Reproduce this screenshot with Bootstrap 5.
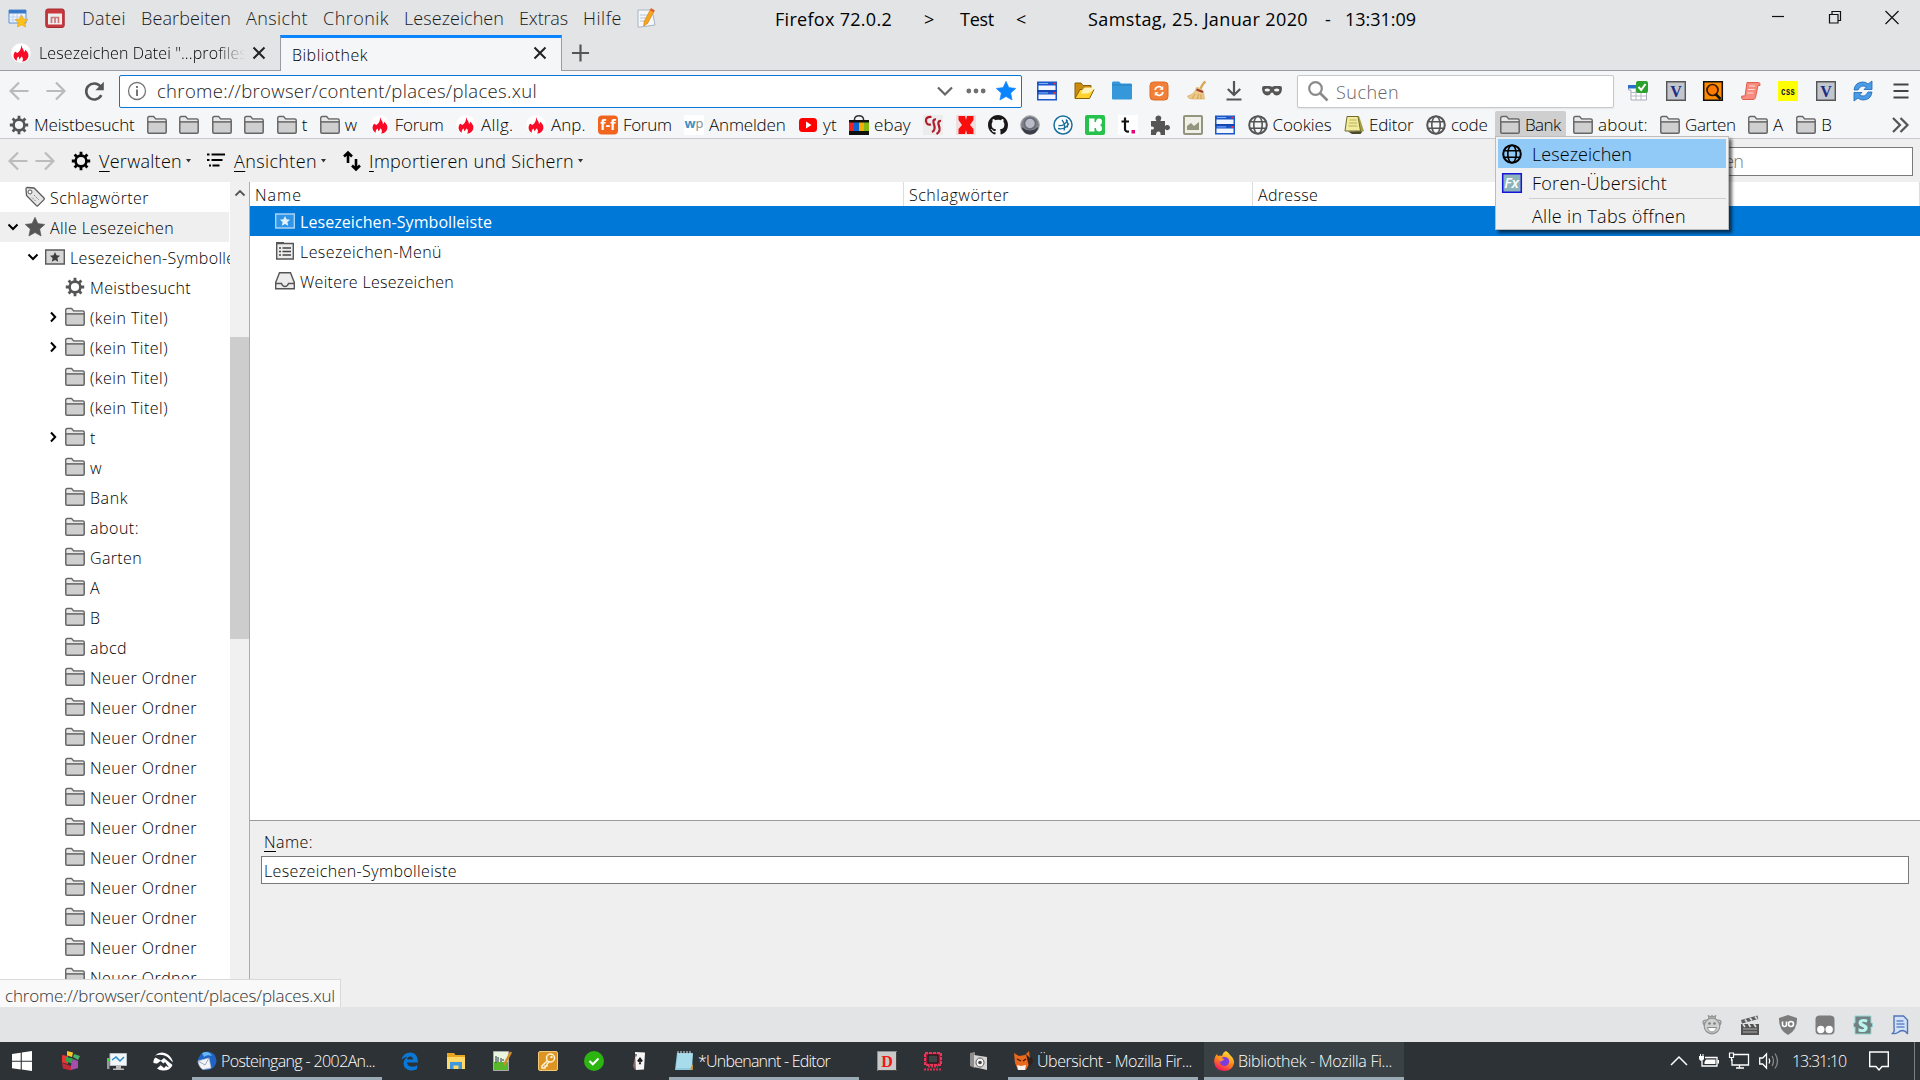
<!DOCTYPE html>
<html lang="de">
<head>
<meta charset="utf-8">
<title>Bibliothek - Mozilla Firefox</title>
<link href="https://cdn.jsdelivr.net/npm/bootstrap@5.3.0/dist/css/bootstrap.min.css" rel="stylesheet">
<style>
body{width:1920px;height:1080px;overflow:hidden;font-family:"Open Sans","Noto Sans",sans-serif;font-size:16px;font-weight:350;line-height:1.2;color:#000;background:#efefef}
svg{display:block;flex:none;width:20px;height:20px;overflow:visible}
span{white-space:pre;padding-top:3px}
.s14{width:14px;height:14px}
.titlebar{height:35px;background:#e2e4e6;font-size:18px;padding-left:8px}
.titlebar .ico2{margin-left:17px}
.titlebar .ico3{margin-left:15px}
.menus{gap:15px;margin-left:17px}
.menus span{color:#1a1a1a}
.caption-txt{margin-left:118px;font-weight:500;color:#000}
.caption-txt span{padding-top:4px}
.caption-txt .c2{margin-left:32px}.caption-txt .c3{margin-left:26px}.caption-txt .c4{margin-left:22px}
.caption-txt .c5{margin-left:62px}.caption-txt .c6{margin-left:17px}.caption-txt .c7{margin-left:14px}
.winbtns{margin-left:auto;padding-right:18.5px;gap:37px;margin-top:-1px}
.tabs{height:36px;background:#e2e4e6;border-bottom:1px solid #9b9b9f}
.tab1{width:280px;padding-left:11px;padding-right:14px}
.tab1 .fade-txt{width:206px;margin-left:8px;overflow:hidden;-webkit-mask-image:linear-gradient(90deg,#000 86%,transparent 100%)}
.tab2{width:282px;height:36px;margin-bottom:-1px;background:#f5f6f7;border:1px solid #9b9b9f;border-width:0 1px;border-top:3px solid #0a84ff;padding:0 14px 3px 11px}
.tab2 span{padding-top:5px}
.newtab{margin-left:9px;width:19px}
.navrow{height:40px;background:#f5f6f7}
.navrow .off{color:#b9babc}
.cell{width:37.5px;display:flex;justify-content:center;flex:none}
.urlbox{width:903px;height:33px;margin-left:6.5px;margin-right:6px;border:1.5px solid #0a78d6;border-radius:2px;background:#fff;padding:0 5px 0 7px;font-size:18.5px;color:#1c1c1c}
.urlbox span{margin-left:10px;padding-top:1px}
.urlbox .dots{margin-left:11px}
.urlbox .fav{margin-left:10px;color:#0a84ff}
.searchbox{width:317px;height:33px;margin:0 5.5px 0 6.5px;border:1px solid #c8c8ca;border-radius:2px;background:#fff;box-shadow:0 1px 2px #0001;padding-left:10px;font-size:18px;color:#666}
.bmbar{height:28px;background:#f5f6f7;border-bottom:1px solid #c9c9cb;padding-left:4px;gap:2.44px;font-size:17px}
.bmbar span{padding-top:1px}
.bm{display:flex;align-items:center;gap:5px;padding:0 5px;height:27px;flex:none}
.bm.on{background:#cfcfd0;border-radius:2px 2px 0 0}
.greyico{color:#555}
.bmbar .more{margin-right:10px}
.libbar{height:43px;padding:1px 7px 0 8px;font-size:18px;color:#000}
.libbar span{padding-top:2px}
.libbar .tri{width:5px;height:4px}
.libbar .off{color:#bcbcbc}
.libbar .fwd{margin-left:7px}
.libbar .g1{margin-left:16px}
.libbar .g2{margin-left:16px}
.libbar .t2{margin-left:7px}
.libsearch{width:380px;height:29px;border:1px solid #7a7a7a;background:#fff;color:#767676;padding-right:169px;justify-content:flex-end}
.work{height:825px}
.side{width:230px;background:#fff;overflow:hidden}
.trow{height:30px;padding-left:25px;gap:5px}
.trow.l1{padding-left:6px}.trow.l2{padding-left:26px}.trow.l3{padding-left:65px}.trow.l3x{padding-left:46px}
.trow .tw{width:14px;height:14px}
.trow.cur{background:#efefef;margin-right:1px}
.sbar{width:19px;background:#f0f0f0}
.sbar svg{margin:1px auto 0}
.thumb{height:302px;margin-top:134px;background:#cdcdcd}
.lib{border-left:1px solid #a3adbd}
.thead{height:24px;background:#fff}
.thead div{border-right:1px solid #dcdcdc;height:24px;padding-left:5px}
.thead .h1c{width:654px}.thead .h2c{width:349px}.thead .h3c{flex:1}
.list{height:615px;background:#fff;border-bottom:1px solid #9a9a9a}
.lrow{height:30px;padding-left:25px;gap:5px}
.lrow.sel{background:#0078d7;color:#fff;font-weight:400}
.details{padding:9px 11px 0 11px}
.details label{display:block;padding-left:3px;height:26px;line-height:18px}
.details .fld{height:28px;border:1px solid #7a7a7a;background:#fff;padding-left:2px}
.statusbar{height:35px;background:#e2e4e6;padding-right:9px;gap:17.8px;justify-content:flex-end}
.statusbar svg{opacity:.95}
.tip{left:0;top:979px;width:341px;height:28px;background:#f9f9f9;border:1px solid #d9d9d9;border-width:1px 1px 0 0;padding:2px 0 0 5px;color:#333;font-size:17px}
.taskbar{height:38px;background:#2d3237;color:#fff;font-size:16px}
.taskbar span{padding-top:2px}
.tcell{width:46px;display:flex;justify-content:center;flex:none}
.tcell.first{width:48px;padding-right:4px}
.tbtn{width:190px;height:38px;border-bottom:3px solid #9aabb6;margin:0 5px 0 6px;padding:3px 0 0 5px;gap:4px;flex:none}
.tbtn.act{width:200px;background:#3a4144;padding-left:10px;margin-left:1px}
.tray{margin-left:auto;gap:10px}
.tray .clock{margin-left:3px;margin-right:13px}
.tray .edge-line{width:1px;height:38px;background:#7a7e82;margin:0 5px 0 15px}
.popup{left:1495px;top:136px;width:234px;height:94px;background:#f1f1f1;border:1px solid #bdbdbd;box-shadow:3px 3px 3px #0009;padding:2px;font-size:18px}
.prow{padding-left:4px;gap:10px;height:29px}
.prow.hot{background:#91c9f7}
.psep{height:1px;background:#cfcfcf;margin:1px 0 0 31px}
.prow.last{padding-left:34px;height:32px}
u{text-underline-offset:3px}
</style>
<script src="https://cdn.jsdelivr.net/npm/bootstrap@5.3.0/dist/js/bootstrap.bundle.min.js"></script>
</head>
<body>
<svg class="d-none" xmlns="http://www.w3.org/2000/svg">
<symbol id="folder" viewBox="0 0 20 20"><path d="M.8 17V3Q.8 1.600 2.200 1.600H6.600L8.600 4H17.800Q19.200 4 19.200 5.400V17Q19.200 18.200 18 18.200H2Q.8 18.200.8 17z" fill="#cfcfcf" stroke="#666" stroke-width="1.500"/><path d="M1.600 6.300V3q0-.6.8-.6h3.900l2 2.400h9.400q.7 0 .7.9v.6z" fill="#e8e8e8"/><path d="M1 6.900H19" stroke="#666" stroke-width="1.500"/></symbol>
<symbol id="gear" viewBox="0 0 20 20"><circle cx="10" cy="10" r="5.400" fill="none" stroke="currentColor" stroke-width="2.600"/><g stroke="currentColor" stroke-width="2.800"><path d="M10 .8V4M10 16v3.200M.8 10H4M16 10h3.200M3.600 3.600l2.200 2.200M14.200 14.200l2.200 2.200M3.600 16.400l2.200-2.200M14.200 5.800l2.200-2.200"/></g></symbol>
<symbol id="fire" viewBox="0 0 20 20"><circle cx="10" cy="10" r="9.800" fill="#fff"/><path d="M10 1.800C10.500 4.800 13 6 13 9.200c.8-.7 1.200-1.500 1.200-2.500C16.500 8.500 18 11 17.300 13.800c-.8 3-3.300 4.800-6.300 4.700 1.500-1.800 1.200-3.600-.6-5.300-.2 1.400-1.400 1.700-1.500 3.200-.8-.8-1.200-1.900-1-3C6 14.300 5.300 15.800 6 17.800 2 16 1.700 11.500 4.200 8.800c1 .2 1.500.7 1.800 1.500C9 8.800 10.500 5.500 10 1.800z" fill="#f90a26"/></symbol>
<symbol id="globe" viewBox="0 0 20 20"><g fill="none" stroke="currentColor" stroke-width="2"><circle cx="10" cy="10" r="8.800"/><ellipse cx="10" cy="10" rx="4.200" ry="8.800" stroke-width="1.600"/><path d="M2.200 6.800H17.800M2.200 13.200H17.800" stroke-width="1.600"/></g></symbol>
<symbol id="sheet" viewBox="0 0 20 20"><path d="M0 .5h20v19H0z" fill="#1d57c8"/><path d="M1.500 4.500h17v4.500h-17zM1.500 13.500h17v4.500h-17z" fill="#f2f7ff"/><path d="M0 9.500h20v1H0z" fill="#1038a0"/><path d="M2 2.500h9M2 11.900h9" stroke="#7fb2ff"/><path d="M16.500 2.500h2M16.500 11.900h2" stroke="#f33" stroke-width="1.700"/></symbol>
<symbol id="vbox" viewBox="0 0 20 20"><path d="M.7.7h18.600v18.600H.7z" fill="#c2c6cc" stroke="#555" stroke-width="1.400"/><text x="10" y="15.500" text-anchor="middle" font-family="Liberation Serif,serif" font-weight="700" font-size="16" fill="#1c2c86">V</text></symbol>
<symbol id="cross" viewBox="0 0 14 14"><path d="M1.500 1.500l11 11M12.500 1.500l-11 11" stroke="#222" stroke-width="2"/></symbol>
<symbol id="arrl" viewBox="0 0 20 20"><path d="M19.500 10H2M10 1.500L1.500 10l8.500 8.500" fill="none" stroke="currentColor" stroke-width="2.200"/></symbol>
<symbol id="arrr" viewBox="0 0 20 20"><path d="M.5 10H18M10 1.500L18.500 10l-8.500 8.500" fill="none" stroke="currentColor" stroke-width="2.200"/></symbol>
<symbol id="tri" viewBox="0 0 5 4"><path d="M0 0h5L2.500 3.500z" fill="#333"/></symbol>
<symbol id="down" viewBox="0 0 14 14"><path d="M2.500 4.500l4.500 4.500 4.500-4.500" fill="none" stroke="#000" stroke-width="2"/></symbol>
<symbol id="right" viewBox="0 0 14 14"><path d="M5 2.500l4.200 4.500L5 11.500" fill="none" stroke="#000" stroke-width="2"/></symbol>
<symbol id="star" viewBox="0 0 20 20"><path d="M10 .3l2.900 6.300 6.900.8-5.100 4.700 1.400 6.900L10 15.600 3.900 19l1.400-6.900L.2 7.400l6.900-.8z" fill="currentColor" stroke="currentColor" stroke-width=".6" stroke-linejoin="round"/></symbol>
</svg>

<header class="titlebar d-flex align-items-center">
 <svg viewBox="0 0 20 20"><path d="M1 2h17v13H1z" fill="#eef4fc" stroke="#5b8fd4"/><path d="M1 2h17v3.500H1z" fill="#3a78c8"/><path d="M5 6v9M9 6v9M13 6v9M1 9h17M1 12h17" stroke="#b5cdea" stroke-width=".8"/><path d="M13.500 7l2 4 4.500.5-3.300 3 .9 4.500-4.100-2.200L9.400 19l.9-4.500-3.300-3 4.500-.5z" fill="#fbc21d" stroke="#e69b10" stroke-width=".6"/></svg>
 <svg class="ico2" viewBox="0 0 20 20"><rect x=".8" y="1" width="18.400" height="18.500" rx="2" fill="#c8383e" stroke="#a32c31"/><path d="M3 5.500h14v11H3z" fill="#eee"/><path d="M6.500 15V9.500h7V15M10 9.500V15" fill="none" stroke="#c8777a" stroke-width="1.700"/></svg>
 <nav class="menus d-flex"><span data-w="44">Datei</span><span data-w="90">Bearbeiten</span><span data-w="62">Ansicht</span><span data-w="66">Chronik</span><span data-w="100">Lesezeichen</span><span data-w="49">Extras</span><span data-w="39">Hilfe</span></nav>
 <svg class="ico3" viewBox="0 0 20 20"><path d="M1 2h14l3 15-14 2H1z" fill="#f5f7fa" stroke="#a9b4c0"/><path d="M3 7h9M3 10h9M3 13h9" stroke="#b7c4d2"/><path d="M14 .5l3.500 2-7 13-3.800 2.500.5-4.500z" fill="#f9a51a" stroke="#c67a12" stroke-width=".6"/><path d="M14 .5l3.500 2-1 1.800-3.400-2z" fill="#e2554a"/></svg>
 <div class="caption-txt d-flex"><span data-w="117">Firefox 72.0.2</span><span class="c2" data-w="10">&gt;</span><span class="c3" data-w="34">Test</span><span class="c4" data-w="10">&lt;</span><span class="c5" data-w="220">Samstag, 25. Januar 2020</span><span class="c6" data-w="6">-</span><span class="c7" data-w="71">13:31:09</span></div>
 <div class="winbtns d-flex"><svg viewBox="0 0 20 20"><path d="M4 9.500h12" stroke="#111" stroke-width="1.200"/></svg><svg viewBox="0 0 20 20"><path d="M4.500 7.500h8.500v8.500H4.500zM7 7.500V4.500h8.500v9H13" fill="none" stroke="#111" stroke-width="1.200"/></svg><svg viewBox="0 0 20 20"><path d="M3.500 4l13 13M16.500 4l-13 13" stroke="#111" stroke-width="1.200"/></svg></div>
</header>

<div class="tabs d-flex align-items-center">
 <div class="tab1 d-flex align-items-center"><svg><use href="#fire"/></svg><div class="fade-txt"><span data-w="208">Lesezeichen Datei "...profiles</span></div><svg class="ms-auto s14"><use href="#cross"/></svg></div>
 <div class="tab2 d-flex align-items-center justify-content-between"><span data-w="76">Bibliothek</span><svg class="s14"><use href="#cross"/></svg></div>
 <svg class="newtab" viewBox="0 0 20 20"><path d="M10 1v18M1 10h18" stroke="#555" stroke-width="2.300"/></svg>
</div>

<div class="navrow d-flex align-items-center">
 <div class="cell off"><svg><use href="#arrl"/></svg></div>
 <div class="cell off"><svg><use href="#arrr"/></svg></div>
 <div class="cell"><svg viewBox="0 0 20 20"><path d="M17.300 14.200A8 8 0 1 1 16.500 5.500" fill="none" stroke="#555" stroke-width="2.600"/><path d="M19.800.8v8.400h-8.400z" fill="#555"/></svg></div>
 <div class="urlbox d-flex align-items-center">
  <svg viewBox="0 0 20 20"><circle cx="10" cy="10" r="8.500" fill="none" stroke="#777" stroke-width="1.300"/><path d="M10 8.500V15M10 5v2" stroke="#777" stroke-width="2"/></svg>
  <span data-w="380">chrome://browser/content/places/places.xul</span>
  <svg class="ms-auto" viewBox="0 0 20 20"><path d="M3 6.500l7 7 7-7" fill="none" stroke="#666" stroke-width="2.200"/></svg>
  <svg class="dots" viewBox="0 0 20 20"><g fill="#707070"><circle cx="2.800" cy="10" r="2.400"/><circle cx="10" cy="10" r="2.400"/><circle cx="17.200" cy="10" r="2.400"/></g></svg>
  <svg class="fav"><use href="#star"/></svg>
 </div>
 <div class="cell"><svg><use href="#sheet"/></svg></div>
 <div class="cell"><svg viewBox="0 0 20 20"><path d="M1 17V2h6l2 2.500h8V8" fill="#c98c10" stroke="#8a6006"/><path d="M1 17.500L6 8.500H20l-4.500 9z" fill="#ffd22e" stroke="#8a6006"/><path d="M8.500 8.500l2.500-2h8l1 2-6 4H7z" fill="#fff3b8"/></svg></div>
 <div class="cell"><svg viewBox="0 0 20 20"><path d="M0 17.500V2q0-1.500 1-1.500h6l2 2h10q1 0 1 1.500v13.500q0 1-1 1H1q-1 0-1-1z" fill="#3498db"/><path d="M0 4h20" stroke="#2a80bd"/></svg></div>
 <div class="cell"><svg viewBox="0 0 20 20"><rect x="1" y="1" width="18" height="18" rx="3.500" fill="#f27f38" stroke="#dd6a24"/><path d="M6 9a4 4 0 0 1 7-2M14 11a4 4 0 0 1-7 2" fill="none" stroke="#fff" stroke-width="1.800"/><path d="M14.200 5v3.800h-3.800zM5.800 15v-3.800h3.800z" fill="#fff"/></svg></div>
 <div class="cell"><svg viewBox="0 0 20 20"><path d="M18.500.5Q15 3 13.500 8" fill="none" stroke="#d9a95a" stroke-width="2.200"/><path d="M9.500 6.500q5 0 7 4.500l1 7H5q-4 0-4.500-3Q8 13 9.500 6.500z" fill="#ecc987" stroke="#d6a95e" stroke-width=".6"/><path d="M9.500 8.500l6.500 2.500" stroke="#9a3c30" stroke-width="2"/><path d="M8 13l-3 4.500M11.500 13l-1 5M14 13.500v4.500" stroke="#c9a05a"/></svg></div>
 <div class="cell"><svg viewBox="0 0 20 20"><path d="M10 0v13.500M3.800 8l6.200 6 6.200-6M2.500 18.500h15" fill="none" stroke="#555" stroke-width="2.200"/></svg></div>
 <div class="cell"><svg viewBox="0 0 20 20"><path d="M0 7q0-2 2-2h5q2 0 3 1 1-1 3-1h5q2 0 2 2 0 7-5 7.500-3 0-4-2.500-.9-1-2 0-1 2.500-4 2.500Q0 14 0 7z" fill="#555"/><ellipse cx="5.300" cy="9" rx="2.700" ry="1.600" fill="#f5f6f7"/><ellipse cx="14.700" cy="9" rx="2.700" ry="1.600" fill="#f5f6f7"/></svg></div>
 <div class="searchbox d-flex align-items-center"><svg viewBox="0 0 20 20"><circle cx="7.500" cy="7.500" r="6.300" fill="none" stroke="#8a8a8a" stroke-width="2.200"/><path d="M12 12l7.500 7.500" stroke="#8a8a8a" stroke-width="2.600"/></svg><span data-w="63" class="ms-2">Suchen</span></div>
 <div class="cell"><svg viewBox="0 0 20 20"><path d="M.5 4.500h18v14.500H3V9H.5z" fill="#fff" stroke="#aab"/><path d="M0 4h9v3.500H0z" fill="#2a6fd0"/><path d="M3 11.500h15M3 15h15M8 8v11M13 8v11" stroke="#b8b8c4"/><rect x="8" y="0" width="12" height="12" rx="2" fill="#2da12d"/><path d="M10.500 6l2.700 3 4.300-6" stroke="#fff" stroke-width="2" fill="none"/></svg></div>
 <div class="cell"><svg><use href="#vbox"/></svg></div>
 <div class="cell"><svg viewBox="0 0 20 20"><path d="M.7.7h18.600v18.600H.7z" fill="#ff8c00" stroke="#111" stroke-width="1.500"/><circle cx="9.500" cy="9" r="5.500" fill="#ff7a00" stroke="#3a1c00" stroke-width="1.700"/><path d="M12.500 13l5 5" stroke="#111" stroke-width="2.500"/></svg></div>
 <div class="cell"><svg viewBox="0 0 20 20"><path d="M6 1.500h11.500q2 0 1.500 3l-2 0-2.500 12q-.5 2-2.500 2H2Q0 18 .8 15H4z" fill="#f98b7d" stroke="#dc5f50"/><path d="M8 5h6M7 8.500h6.500M6.500 12h6" stroke="#fdd"/></svg></div>
 <div class="cell"><svg viewBox="0 0 20 20"><path d="M0 0h20v20H0z" fill="#ff0"/><text x="10" y="13.500" text-anchor="middle" font-family="Liberation Mono,monospace" font-weight="700" font-size="10.500" textLength="14" lengthAdjust="spacingAndGlyphs" fill="#113">css</text></svg></div>
 <div class="cell"><svg><use href="#vbox"/></svg></div>
 <div class="cell"><svg viewBox="0 0 20 20"><path d="M1 9Q2 1 10 1q3 0 5 2L19 0v8.500h-8L13.500 6Q8 3 5 9zM19 11q-1 8-9 8-3 0-5-2l-4 3v-8.500h8L6.500 14q5.500 3 8.500-3z" fill="#4a9ce6" stroke="#1a66b8" stroke-width=".8"/></svg></div>
 <div class="cell"><svg viewBox="0 0 20 20"><path d="M2.500 3.500h15M2.500 10h15M2.500 16.500h15" stroke="#444" stroke-width="2.200"/></svg></div>
</div>

<div class="bmbar d-flex align-items-center">
 <div class="bm"><svg class="greyico"><use href="#gear"/></svg><span data-w="100.600">Meistbesucht</span></div>
 <div class="bm"><svg><use href="#folder"/></svg></div>
 <div class="bm"><svg><use href="#folder"/></svg></div>
 <div class="bm"><svg><use href="#folder"/></svg></div>
 <div class="bm"><svg><use href="#folder"/></svg></div>
 <div class="bm"><svg><use href="#folder"/></svg><span data-w="5.600">t</span></div>
 <div class="bm"><svg><use href="#folder"/></svg><span data-w="12.600">w</span></div>
 <div class="bm"><svg><use href="#fire"/></svg><span data-w="48.600">Forum</span></div>
 <div class="bm"><svg><use href="#fire"/></svg><span data-w="32.600">Allg.</span></div>
 <div class="bm"><svg><use href="#fire"/></svg><span data-w="34.600">Anp.</span></div>
 <div class="bm"><svg viewBox="0 0 20 20"><rect y=".5" width="20" height="19" rx="4" fill="#f0641e"/><text x="10" y="15" text-anchor="middle" font-family="Open Sans,sans-serif" font-weight="700" font-size="14" fill="#fff">f-f</text></svg><span data-w="48.600">Forum</span></div>
 <div class="bm"><svg viewBox="0 0 20 20"><path d="M0 0h20v20H0z" fill="#fff"/><text x="0.500" y="13" font-family="Open Sans,sans-serif" font-weight="700" font-size="13" fill="#3b8fc4" textLength="19" lengthAdjust="spacingAndGlyphs">w<tspan fill="#8a8a8a" font-weight="400">p</tspan></text></svg><span data-w="76.600">Anmelden</span></div>
 <div class="bm"><svg viewBox="0 0 20 20"><rect x="1" y="3" width="18" height="14" rx="3.500" fill="#f00"/><path d="M8 6.500v7l5.500-3.500z" fill="#fff"/></svg><span data-w="13.600">yt</span></div>
 <div class="bm"><svg viewBox="0 0 20 20"><path d="M5.500 7V4Q6 .8 10 .8T14.500 4v3" fill="none" stroke="#333" stroke-width="1.500"/><path d="M0 5h20v15H0z" fill="#111"/><path d="M0 7.500h5V16H0z" fill="#e22"/><path d="M5 7.500h5V16H5z" fill="#0a64d2"/><path d="M10 7.500h5V16h-5z" fill="#f5af02"/><path d="M15 7.500h5V16h-5z" fill="#86b817"/></svg><span data-w="36.600">ebay</span></div>
 <div class="bm"><svg viewBox="0 0 20 20"><path d="M0 0h20v20H0z" fill="#ececec"/><path d="M8.500 2Q2.500 1.500 3 6t5 3.500M13 4.500Q9 4 11 9.500T9 17M18 6Q14 5.500 16 11t-2.500 8" fill="none" stroke="#b01c2c" stroke-width="2.200"/></svg></div>
 <div class="bm"><svg viewBox="0 0 20 20"><path d="M0 0h20v20H0z" fill="#f0dede"/><path d="M2.500 1H9l1 4 1-4h6.500v4L14 10l3.500 4v5H11l-1-4-1 4H2.500v-5L6 10 2.500 5z" fill="#f90d0d"/></svg></div>
 <div class="bm"><svg viewBox="0 0 16 16"><path fill="#191717" d="M8 0C3.580 0 0 3.580 0 8c0 3.540 2.290 6.530 5.470 7.590.4.070.55-.17.55-.38 0-.19-.01-.82-.01-1.490-2.010.37-2.530-.49-2.690-.94-.09-.23-.48-.94-.82-1.130-.28-.15-.68-.52-.01-.53.63-.01 1.080.58 1.230.82.72 1.210 1.870.87 2.330.66.070-.52.28-.87.510-1.070-1.780-.2-3.640-.89-3.640-3.950 0-.87.310-1.590.82-2.150-.08-.2-.36-1.020.08-2.120 0 0 .67-.21 2.200.82.640-.18 1.320-.27 2-.27s1.360.09 2 .27c1.530-1.040 2.200-.82 2.200-.82.440 1.100.16 1.920.08 2.120.510.560.82 1.270.82 2.150 0 3.070-1.870 3.750-3.650 3.950.290.250.540.730.540 1.480 0 1.070-.01 1.930-.01 2.200 0 .21.150.460.550.38A8.010 8.010 0 0 0 16 8c0-4.420-3.580-8-8-8z"/></svg></div>
 <div class="bm"><svg viewBox="0 0 20 20"><circle cx="10" cy="10" r="9.300" fill="#7c808a" stroke="#aaa"/><circle cx="10" cy="8.500" r="5.500" fill="#b9bcc6" stroke="#666a74" stroke-width="1.500"/><path d="M1.500 12q8.500 7 17 0-2 7.500-8.500 7.500T1.500 12z" fill="#3b3e48"/></svg></div>
 <div class="bm"><svg viewBox="0 0 20 20"><circle cx="10" cy="10" r="9" fill="#fff" stroke="#1a6f9e" stroke-width="1.500"/><path d="M5 13.500q7 1.500 11-5M5.500 10.500q6 1 9-5.500M9 5q4 5 2 10.500M13 4.500q3 4 1 8" fill="none" stroke="#1a6f9e" stroke-width="1.300"/></svg></div>
 <div class="bm"><svg viewBox="0 0 20 20"><rect width="20" height="20" rx="2" fill="#27c24c"/><path d="M4 3.500h5.500v3.500h1.500q0-3.500 3-3.500t3 3-2 3.500q2 .5 2 3.500t-3 3-3-3.500H9.500v3.500H4z" fill="#fff"/></svg></div>
 <div class="bm"><svg viewBox="0 0 20 20"><path d="M0 0h20v20H0z" fill="#fff"/><path d="M7 2.500V14q0 3 4 2.500M3.500 6.500H11" fill="none" stroke="#111" stroke-width="2.200"/><path d="M13.500 15h3.500v3.500h-3.500z" fill="#e6007e"/></svg></div>
 <div class="bm"><svg viewBox="0 0 20 20"><path d="M1 6h5.500Q5 4 5.500 2.500 6.300.5 8.500.5t2.800 2q0 1.500-1 3.500H15v5q1-1.500 3-1t2 2.500-2 2.500-3-1V20h-4.500q.5-3.500-2-3.500T6 20H1v-5.500q3 .5 3-1.500t-3-1.500z" fill="#555"/></svg></div>
 <div class="bm"><svg viewBox="0 0 20 20"><rect x="1" y="1" width="18" height="18" rx="1" fill="#f0f0e8" stroke="#93957f" stroke-width="2"/><path d="M4 15v-4l4-3 3 3 5-4v8z" fill="#93957f"/></svg></div>
 <div class="bm"><svg><use href="#sheet"/></svg></div>
 <div class="bm"><svg class="greyico"><use href="#globe"/></svg><span data-w="59">Cookies</span></div>
 <div class="bm"><svg viewBox="0 0 20 20"><path d="M5 2l10-1 5 15-8 3z" fill="#a7a04a"/><path d="M3 1.500h11l2.500 14.500H1z" fill="#f1eb9a" stroke="#6f6b30"/><path d="M5.500 5h7M5 8h8M4.500 11h9" stroke="#b9b060"/><path d="M4 16.500h14.500l-2 2.500H8z" fill="#4a4a2a"/></svg><span data-w="44.600">Editor</span></div>
 <div class="bm"><svg class="greyico"><use href="#globe"/></svg><span data-w="36.600">code</span></div>
 <div class="bm on"><svg><use href="#folder"/></svg><span data-w="35.600">Bank</span></div>
 <div class="bm"><svg><use href="#folder"/></svg><span data-w="49.600">about:</span></div>
 <div class="bm"><svg><use href="#folder"/></svg><span data-w="50.600">Garten</span></div>
 <div class="bm"><svg><use href="#folder"/></svg><span data-w="10.600">A</span></div>
 <div class="bm"><svg><use href="#folder"/></svg><span data-w="10">B</span></div>
 <svg class="ms-auto more" viewBox="0 0 20 20"><path d="M3 3l7 7-7 7M10.500 3l7 7-7 7" fill="none" stroke="#555" stroke-width="2.200"/></svg>
</div>

<div class="libbar d-flex align-items-center">
 <svg class="off"><use href="#arrl"/></svg>
 <svg class="off fwd"><use href="#arrr"/></svg>
 <svg class="g1"><use href="#gear"/></svg>
 <span data-w="83" class="ms-2"><u>V</u>erwalten</span><svg class="tri ms-1"><use href="#tri"/></svg>
 <svg class="g2" viewBox="0 0 20 20"><path d="M0 3.500h2.500M0 9h2.500M4.500 3.500H18M4.500 9h11M2 14.500h2M5.500 14.500h7" stroke="#000" stroke-width="2.200"/></svg>
 <span data-w="83" class="t2"><u>A</u>nsichten</span><svg class="tri ms-1"><use href="#tri"/></svg>
 <svg class="g2" viewBox="0 0 20 20"><path d="M6 12V2M2 5.500L6 1.500l4 4M14 8v10M10 14.500l4 4 4-4" fill="none" stroke="#000" stroke-width="2.600"/></svg>
 <span data-w="205" class="t2"><u>I</u>mportieren und Sichern</span><svg class="tri ms-1"><use href="#tri"/></svg>
 <div class="libsearch ms-auto d-flex align-items-center"><span data-w="190">Lesezeichen durchsuchen</span></div>
</div>

<main class="work d-flex">
 <aside class="side">
  <div class="trow d-flex align-items-center"><svg viewBox="0 0 20 20"><path d="M1 2q0-1.500 1.500-1.500L9 1l10 10q.8.800 0 1.600l-6 6q-.8.800-1.600 0L1.500 8.500z" fill="#e6e6e6" stroke="#5a5a5a" stroke-width="1.300"/><circle cx="5" cy="5" r="2" fill="#fff" stroke="#5a5a5a"/><path d="M9 8l5 5M7 10.500l4 4" stroke="#8a8a8a" stroke-width="1" stroke-dasharray="2 1"/></svg><span data-w="99">Schlagwörter</span></div>
  <div class="trow l1 cur d-flex align-items-center"><svg class="tw"><use href="#down"/></svg><svg class="greyico"><use href="#star"/></svg><span data-w="124">Alle Lesezeichen</span></div>
  <div class="trow l2 d-flex align-items-center"><svg class="tw"><use href="#down"/></svg><svg viewBox="0 0 20 20"><path d="M.7 3h18.600v14H.7z" fill="#d6d6d6" stroke="#5a5a5a" stroke-width="1.400"/><path d="M10 5l1.500 3.300 3.600.4-2.700 2.400.8 3.600L10 12.900l-3.200 1.800.8-3.600-2.700-2.400 3.600-.4z" fill="#3d3d3d"/></svg><span data-w="192">Lesezeichen-Symbolleiste</span></div>
  <div class="trow l3 d-flex align-items-center"><svg class="greyico"><use href="#gear"/></svg><span data-w="101">Meistbesucht</span></div>
  <div class="trow l3x d-flex align-items-center"><svg class="tw"><use href="#right"/></svg><svg><use href="#folder"/></svg><span data-w="78">(kein Titel)</span></div>
  <div class="trow l3x d-flex align-items-center"><svg class="tw"><use href="#right"/></svg><svg><use href="#folder"/></svg><span data-w="78">(kein Titel)</span></div>
  <div class="trow l3 d-flex align-items-center"><svg><use href="#folder"/></svg><span data-w="78">(kein Titel)</span></div>
  <div class="trow l3 d-flex align-items-center"><svg><use href="#folder"/></svg><span data-w="78">(kein Titel)</span></div>
  <div class="trow l3x d-flex align-items-center"><svg class="tw"><use href="#right"/></svg><svg><use href="#folder"/></svg><span>t</span></div>
  <div class="trow l3 d-flex align-items-center"><svg><use href="#folder"/></svg><span>w</span></div>
  <div class="trow l3 d-flex align-items-center"><svg><use href="#folder"/></svg><span data-w="38">Bank</span></div>
  <div class="trow l3 d-flex align-items-center"><svg><use href="#folder"/></svg><span data-w="49">about:</span></div>
  <div class="trow l3 d-flex align-items-center"><svg><use href="#folder"/></svg><span data-w="52">Garten</span></div>
  <div class="trow l3 d-flex align-items-center"><svg><use href="#folder"/></svg><span>A</span></div>
  <div class="trow l3 d-flex align-items-center"><svg><use href="#folder"/></svg><span>B</span></div>
  <div class="trow l3 d-flex align-items-center"><svg><use href="#folder"/></svg><span data-w="37">abcd</span></div>
  <div class="trow l3 d-flex align-items-center"><svg><use href="#folder"/></svg><span data-w="107">Neuer Ordner</span></div>
  <div class="trow l3 d-flex align-items-center"><svg><use href="#folder"/></svg><span data-w="107">Neuer Ordner</span></div>
  <div class="trow l3 d-flex align-items-center"><svg><use href="#folder"/></svg><span data-w="107">Neuer Ordner</span></div>
  <div class="trow l3 d-flex align-items-center"><svg><use href="#folder"/></svg><span data-w="107">Neuer Ordner</span></div>
  <div class="trow l3 d-flex align-items-center"><svg><use href="#folder"/></svg><span data-w="107">Neuer Ordner</span></div>
  <div class="trow l3 d-flex align-items-center"><svg><use href="#folder"/></svg><span data-w="107">Neuer Ordner</span></div>
  <div class="trow l3 d-flex align-items-center"><svg><use href="#folder"/></svg><span data-w="107">Neuer Ordner</span></div>
  <div class="trow l3 d-flex align-items-center"><svg><use href="#folder"/></svg><span data-w="107">Neuer Ordner</span></div>
  <div class="trow l3 d-flex align-items-center"><svg><use href="#folder"/></svg><span data-w="107">Neuer Ordner</span></div>
  <div class="trow l3 d-flex align-items-center"><svg><use href="#folder"/></svg><span data-w="107">Neuer Ordner</span></div>
  <div class="trow l3 d-flex align-items-center"><svg><use href="#folder"/></svg><span data-w="107">Neuer Ordner</span></div>
 </aside>
 <div class="sbar"><svg viewBox="0 0 20 20"><path d="M5.500 12.500l4.500-4.500 4.500 4.500" fill="none" stroke="#555" stroke-width="1.800"/></svg><div class="thumb"></div></div>
 <section class="lib flex-fill d-flex flex-column">
  <div class="thead d-flex"><div class="h1c d-flex align-items-center"><span data-w="47">Name</span></div><div class="h2c d-flex align-items-center"><span data-w="100">Schlagwörter</span></div><div class="h3c d-flex align-items-center"><span data-w="60">Adresse</span></div></div>
  <div class="list">
   <div class="lrow sel d-flex align-items-center"><svg viewBox="0 0 20 20"><path d="M.7 3h18.600v14H.7z" fill="#2f95e6" stroke="#a9d2f5" stroke-width="1.400"/><path d="M10 5l1.500 3.300 3.600.4-2.700 2.400.8 3.600L10 12.900l-3.200 1.800.8-3.600-2.700-2.400 3.600-.4z" fill="#e4f2fd"/></svg><span data-w="192">Lesezeichen-Symbolleiste</span></div>
   <div class="lrow d-flex align-items-center"><svg viewBox="0 0 20 20"><path d="M1.700 2.500h16.600v15.500H1.700z" fill="#ececec" stroke="#555" stroke-width="1.400"/><path d="M1 2h8" stroke="#555" stroke-width="2"/><path d="M4 7h2M4 10.500h2M4 14h2M7.500 7H16M7.500 10.500H16M7.500 14H16" stroke="#444" stroke-width="1.400"/></svg><span data-w="142">Lesezeichen-Menü</span></div>
   <div class="lrow d-flex align-items-center"><svg viewBox="0 0 20 20"><path d="M.7 11.500L4.500 1.700h11l3.800 9.800v6.300H.7z" fill="#ececec" stroke="#555" stroke-width="1.400"/><path d="M1 12.500h5.500Q7.500 15.500 10 15.500t3.500-3H19" fill="none" stroke="#555" stroke-width="1.400"/></svg><span data-w="154">Weitere Lesezeichen</span></div>
  </div>
  <div class="details flex-fill"><label><span data-w="49"><u>N</u>ame:</span></label><div class="fld d-flex align-items-center"><span data-w="193">Lesezeichen-Symbolleiste</span></div></div>
 </section>
</main>

<div class="statusbar d-flex align-items-center">
 <svg viewBox="0 0 20 20"><g fill="#cfcfcf" stroke="#8e8e8e" stroke-width="1.200"><circle cx="3.500" cy="7.500" r="2.500"/><circle cx="16.500" cy="7.500" r="2.500"/><path d="M7 4L6.500.8 9 2l1-1.500L11 2l2.500-1.200L13 4" /><circle cx="10" cy="11" r="7.800"/></g><path d="M5.500 12.500h9q-1 4.500-4.500 4.500t-4.500-4.500z" fill="#fff" stroke="#888"/><circle cx="7.500" cy="8.500" r="1.300" fill="#777"/><circle cx="12.500" cy="8.500" r="1.300" fill="#777"/></svg>
 <svg viewBox="0 0 20 20"><path d="M1 9h18v11H1z" fill="#4c4c4c"/><path d="M1 5L17.500.5l.8 3.500L2 8.500z" fill="#555"/><path d="M5 4.500l2 2.500M10 3l2 2.500M15 1.500l2 2.500M3 9l2 3M8.500 9l2 3M14 9l2 3" stroke="#ddd" stroke-width="1.800"/><path d="M3 14h14M3 17h14" stroke="#aaa"/></svg>
 <svg viewBox="0 0 20 20"><path d="M10 0l9 3q.5 12-9 17Q.5 15 1 3z" fill="#777"/><path d="M4.500 6.500v3q0 2 2 2t2-2v-3" fill="none" stroke="#fff" stroke-width="1.600"/><circle cx="13" cy="9" r="2.500" fill="none" stroke="#fff" stroke-width="1.600"/></svg>
 <svg viewBox="0 0 20 20"><rect x=".5" y=".5" width="19" height="19" rx="4" fill="#777"/><circle cx="5.800" cy="14.500" r="3.700" fill="#fff"/><circle cx="14.200" cy="14.500" r="3.700" fill="#fff"/></svg>
 <svg viewBox="0 0 20 20"><path d="M2 1h16v7h1.500v4H18v7H2v-7H.5V8H2z" fill="#6d7d7d" stroke="#8fd8d2"/><text x="10" y="16.500" text-anchor="middle" font-family="Open Sans,sans-serif" font-weight="800" font-size="18" fill="#b9f4ee">S</text></svg>
 <svg viewBox="0 0 20 20"><path d="M3 1h9.500l4 4v14Q15 16 12 15.500 9 15.500 7 17.500 4.500 19 1.500 18.500 4 16.500 3 13z" fill="#d3e2fa" stroke="#4a6fb4" stroke-width="1.400"/><path d="M5.500 6h7M5.500 9h8M5.500 12h8" stroke="#5b82c8" stroke-width="1.300"/></svg>
</div>

<footer class="taskbar d-flex align-items-center">
 <div class="tcell first"><svg viewBox="0 0 20 20"><path d="M0 3l8.700-1.300v8H0zM9.800 1.500L20 0v9.700H9.800zM0 10.700h8.700v7.800L0 17.200zM9.800 10.700H20V20L9.800 18.600z" fill="#fff"/></svg></div>
 <div class="tcell"><svg viewBox="0 0 20 20"><path d="M1 4l6 1v8l-6-1.500z" fill="#e33"/><path d="M1 12l9 3v4.500l-8-2z" fill="#c22a3a"/><path d="M6 0l6 1.500L11 6 6 4.500z" fill="#f7c928"/><path d="M5 6l7 1.500-1 5-6-2z" fill="#2fa84a"/><path d="M13 3l6 2-2 4-5-3z" fill="#4bb069"/><path d="M12 8l5 2v7l-7 2v-5z" fill="#a44fae"/></svg></div>
 <div class="tcell"><svg viewBox="0 0 20 20"><path d="M3 2.500h16.500v12H3z" fill="#f2f6f8" stroke="#b8c1c6"/><path d="M5 9l4-3 4 4 4-4" fill="none" stroke="#2a88c8" stroke-width="1.500"/><path d="M9 15h5v2.500h3v1.500H6v-1.500h3z" fill="#bbb"/><path d="M0 7h2.500v11H0z" fill="#999"/><path d="M.5 8h2v2h-2z" fill="#2e2"/></svg></div>
 <div class="tcell"><svg viewBox="0 0 20 20"><path d="M2 4.500Q8-1 15 3.500q4 3 5 8L14.500 6Q9 2.500 2 4.500z" fill="#fff"/><path d="M.5 12Q0 8.500 2.500 6.500L8 9.500l3-2.500 8.500 7q-2 5.500-9.500 5.500-3.500 0-6-2l4-3.500-2-1z" fill="#fff"/><path d="M1 15l6.500-5 3 2.500 1.500-1.500 4 5.500-3-1.500-2 2-4-3.500z" fill="#2d3237"/></svg></div>
 <div class="tbtn d-flex align-items-center"><svg viewBox="0 0 20 20"><path d="M4 3Q10-2 17 3q5 7 0 13-5 5-11 2Q-1 13 1 8z" fill="#1f64c4"/><path d="M5 2q7-3 10 3-5-2-8 1z" fill="#69b7f5"/><path d="M1 10l11-3 2 10-8 1.500q-4-2-5-8.500z" fill="#f3f5f8" stroke="#b9c1cd" stroke-width=".7"/><path d="M1 10l7 4 4-7" fill="none" stroke="#9ba8b8"/></svg><span data-w="154">Posteingang - 2002An...</span></div>
 <div class="tcell"><svg viewBox="0 0 20 20"><path d="M1.500 9Q3 1.500 10.500 1.500 18 2 18 11.500H7q.5 4 5 4.200 3 0 5-1.500V18q-3 1.500-6 1.500Q3.500 19 3.500 12q.5-4 4-6Q3.500 6 1.500 9zM7.200 8.500H13Q13 5.500 10.200 5.500T7.200 8.500z" fill="#0a78d7"/></svg></div>
 <div class="tcell"><svg viewBox="0 0 20 20"><path d="M1 2h7l1.500 2H19v13H1z" fill="#e9a61e"/><path d="M1 6h18v12H1z" fill="#ffd867"/><path d="M4 18v-7h12v7h-3.500v-3.500h-5V18z" fill="#3f98dc"/></svg></div>
 <div class="tcell"><svg viewBox="0 0 20 20"><path d="M1.500.5h15v19h-15z" fill="#e9f5dd" stroke="#aaa"/><path d="M2 11h14v8H2z" fill="#58b82a"/><path d="M4 5v7M6 6v5M9 7v4M11 8v2" stroke="#234"/><path d="M19 1l-7 13" stroke="#d58b2a" stroke-width="2.500"/></svg></div>
 <div class="tcell"><svg viewBox="0 0 20 20"><rect x=".5" y=".5" width="19" height="19" rx="1.500" fill="#dc9422" stroke="#f3c877"/><circle cx="12.500" cy="7" r="4" fill="none" stroke="#fff3d8" stroke-width="1.500"/><circle cx="13.500" cy="6" r="1.200" fill="#fff3d8"/><path d="M9.500 9.500L4 15v2h3v-2h2v-2l2-2" fill="none" stroke="#fff3d8" stroke-width="1.500"/></svg></div>
 <div class="tcell"><svg viewBox="0 0 20 20"><circle cx="10" cy="10" r="10" fill="#2cb411"/><path d="M5.500 10l3.300 3.300L14.500 7.500" fill="none" stroke="#fff" stroke-width="2"/></svg></div>
 <div class="tcell"><svg viewBox="0 0 20 20"><path d="M3 15L6 2l2 16-3 1z" fill="#8c6a6c"/><path d="M5 1l10 .5-1 17-8 .5z" fill="#f5f5f5"/><path d="M10 6l2.700 3.500q-.3 2-2.200 1.200l.8 2.500H8.700l.8-2.500q-1.900.8-2.200-1.200z" fill="#222"/><path d="M6 3v2.500" stroke="#222"/></svg></div>
 <div class="tbtn d-flex align-items-center"><svg viewBox="0 0 20 20"><path d="M3 2h16l-1 17H1z" fill="#8fcbe0"/><path d="M4 3h14.500l-1 14H2z" fill="#a9dcea"/><path d="M16 18l3-5v6z" fill="#c9923a"/><path d="M4 0v3M7 0v3M10 0v3M13 0v3M16 0v3" stroke="#d8e4ea"/></svg><span data-w="132">*Unbenannt - Editor</span></div>
 <div class="tcell"><svg viewBox="0 0 20 20"><path d="M.5.500h19v19H.5z" fill="#c9c9c9" stroke="#8e8e8e"/><path d="M19.500 1v18.500H1" fill="none" stroke="#444"/><text x="10" y="15.500" text-anchor="middle" font-family="Liberation Serif,serif" font-weight="700" font-size="16" fill="#f21616">D</text></svg></div>
 <div class="tcell"><svg viewBox="0 0 20 20"><path d="M2 2h16v12H2z" fill="#a01c38" stroke="#e23a5c" stroke-width="2" stroke-dasharray="3 1"/><path d="M5 4h10v8H5z" fill="#3d4244" stroke="#111"/><path d="M5 15.500h10M1 18.500h18" stroke="#e0304f" stroke-width="2" stroke-dasharray="2 1"/></svg></div>
 <div class="tcell"><svg viewBox="0 0 20 20"><path d="M1 2l5-1v16l-5-2z" fill="#8d8d8d"/><path d="M5 4l13 2v13L5 16z" fill="#d4d4d4"/><ellipse cx="11" cy="11.500" rx="4" ry="4.500" fill="#f5f5f5" stroke="#555"/><circle cx="11" cy="11.500" r="1.800" fill="#444"/></svg></div>
 <div class="tbtn d-flex align-items-center"><svg viewBox="0 0 20 20"><path d="M1 2l5 3 6-1 4-4 1 8q2 4-2 7l-2 4H5L2 12z" fill="#e8691c"/><path d="M13 3l4 4 2-1 1 5-4 5z" fill="#332019"/><path d="M4 14l4 1 5-1-1 5H5z" fill="#f7f2ee"/><path d="M4 8l4 2M13 8l-3 2" stroke="#301808" stroke-width="1.300"/></svg><span data-w="155">Übersicht - Mozilla Fir...</span></div>
 <div class="tbtn act d-flex align-items-center"><svg viewBox="0 0 20 20"><defs><linearGradient id="ff" x1=".8" y1="0" x2=".3" y2="1"><stop offset="0" stop-color="#ffe63b"/><stop offset=".5" stop-color="#ff8a1c"/><stop offset="1" stop-color="#f31260"/></linearGradient></defs><path d="M12 0q3 2 4 4 5 4 3.800 9Q18 20 10 20 1 19.500 .2 11 0 6 3 3l1 2q2-1 4 0 1-4 4-5z" fill="url(#ff)"/><circle cx="10.500" cy="10.500" r="4.600" fill="#7a3be0"/><path d="M4 7q4-1 6.500 2-3 0-3.500 2z" fill="#ff9a1f"/></svg><span data-w="154">Bibliothek - Mozilla Fi...</span></div>
 <div class="tray d-flex align-items-center">
  <svg viewBox="0 0 20 20"><path d="M2 14l8-8 8 8" fill="none" stroke="#fff" stroke-width="1.500"/></svg>
  <svg viewBox="0 0 20 20"><path d="M6 6.500h12v8.500H3V10" fill="none" stroke="#fff" stroke-width="1.300"/><path d="M7 8.500h9.500V13H5.500v-2zM18.500 9H20v3.500h-1.500zM0 5h5v3q-1 2-2.500 2T0 8zM1 3h1v2H1zM3.500 3h1v2h-1z" fill="#fff"/></svg>
  <svg viewBox="0 0 20 20"><path d="M5 3.500h14.500V14H3V8M10.500 14v3.500M7 17h8" fill="none" stroke="#fff" stroke-width="1.300"/><path d="M.5 2h4v4.500h-4zM2.500 6.500V10" fill="none" stroke="#fff" stroke-width="1.200"/></svg>
  <svg viewBox="0 0 20 20"><path d="M.7 7h3L7.500 3v14L3.700 13h-3z" fill="none" stroke="#fff" stroke-width="1.300"/><path d="M10 7.500q1.500 2.500 0 5" fill="none" stroke="#fff" stroke-width="1.300"/><path d="M13 5q3 5 0 10M16 2.500q5 7.500 0 15" fill="none" stroke="#888" stroke-width="1.300"/></svg>
  <span class="clock" data-w="54">13:31:10</span>
  <svg viewBox="0 0 20 20"><path d="M.7 1h18.600v14.500H13l-3 3.500-3-3.500H.7z" fill="none" stroke="#fff" stroke-width="1.400"/></svg>
  <div class="edge-line"></div>
 </div>
</footer>

<div class="tip position-absolute d-flex align-items-center"><span data-w="330">chrome://browser/content/places/places.xul</span></div>

<div class="popup position-absolute">
 <div class="prow hot d-flex align-items-center"><svg><use href="#globe"/></svg><span data-w="100">Lesezeichen</span></div>
 <div class="prow d-flex align-items-center"><svg viewBox="0 0 20 20"><path d="M.7.7h18.600v18.600H.7z" fill="#8db4bd" stroke="#1414dc" stroke-width="1.500"/><text x="9.500" y="14.500" text-anchor="middle" font-family="Open Sans,sans-serif" font-style="italic" font-weight="600" font-size="14.500" fill="#fff">Fx</text></svg><span data-w="135">Foren-Übersicht</span></div>
 <div class="psep"></div>
 <div class="prow last d-flex align-items-center"><span data-w="154">Alle in Tabs öffnen</span></div>
</div>

<script>
// Track each label so that it fills exactly the width reserved for it.
document.querySelectorAll('[data-w]').forEach(el => {
  const w = parseFloat(el.dataset.w), n = el.textContent.length;
  el.style.display = 'inline-block';
  el.style.flex = 'none';
  const nat = el.getBoundingClientRect().width;
  el.style.letterSpacing = ((w - nat) / n).toFixed(3) + 'px';
});
</script>
</body>
</html>
